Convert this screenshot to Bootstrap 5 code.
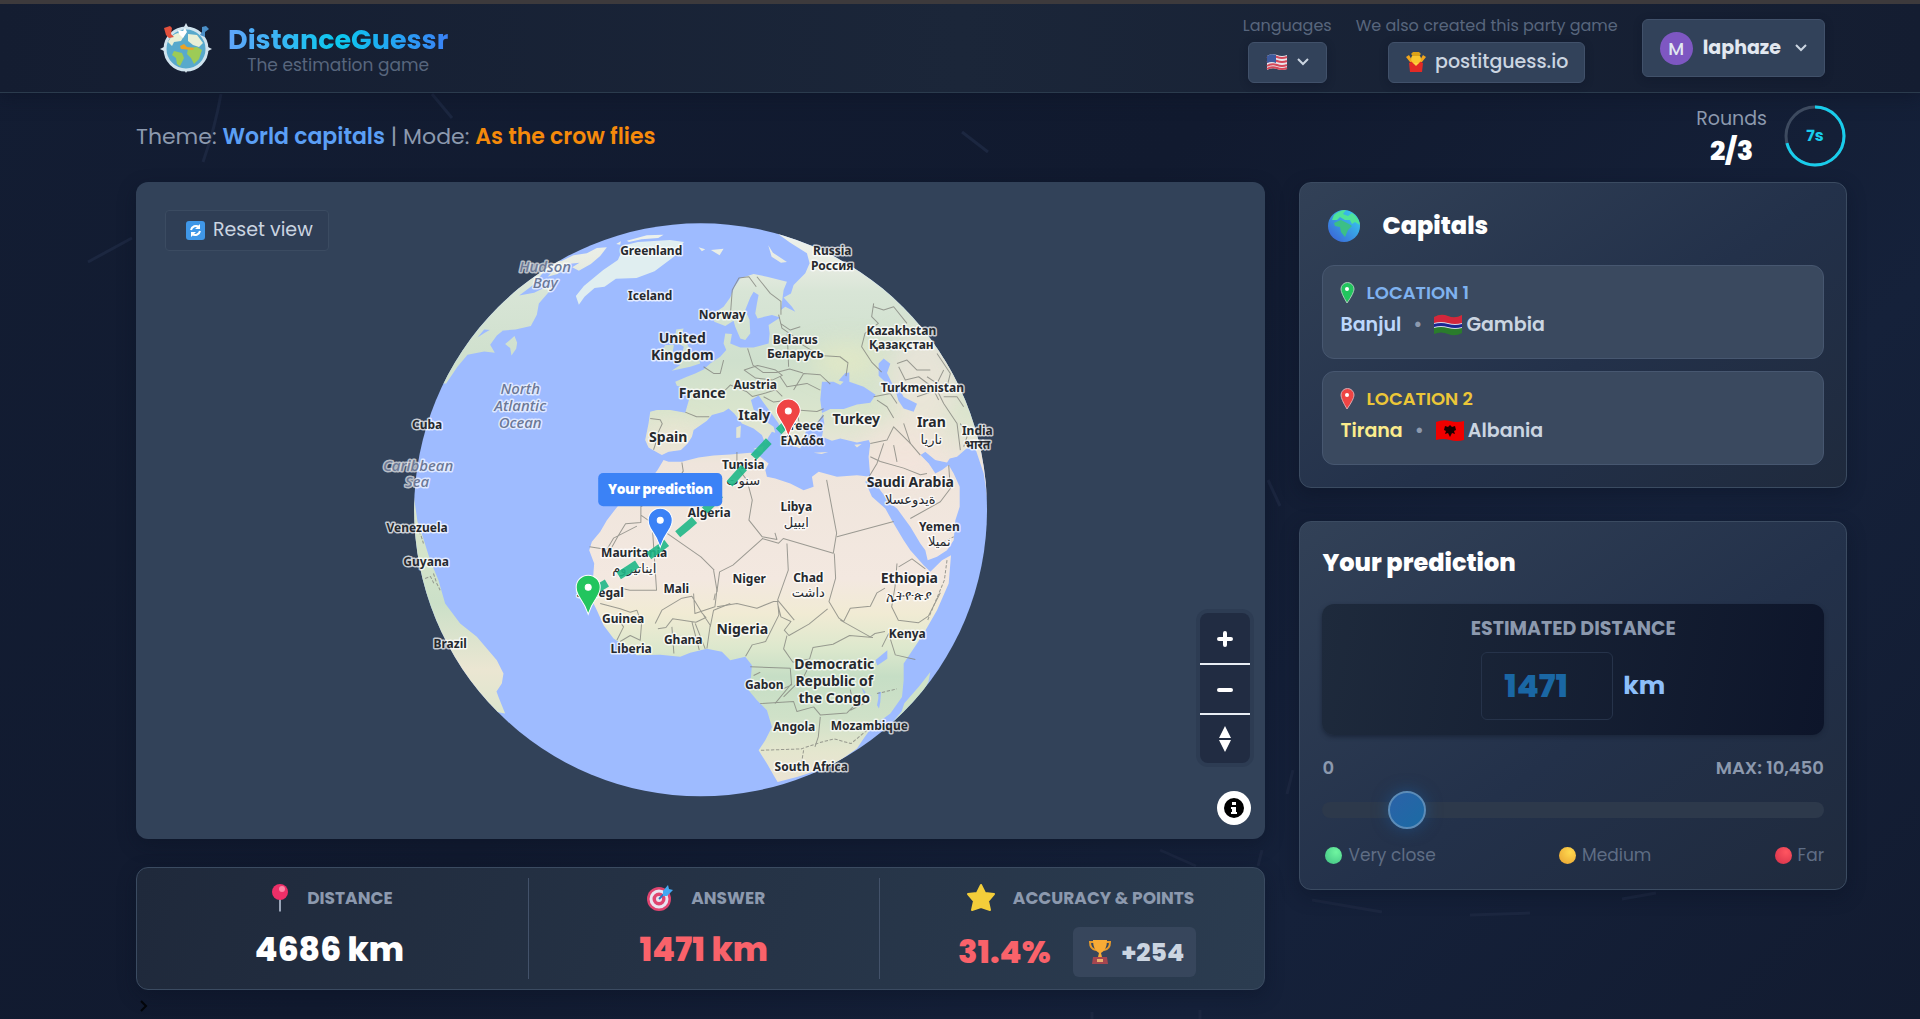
<!DOCTYPE html>
<html lang="en">
<head>
<meta charset="utf-8">
<meta name="viewport" content="width=device-width, initial-scale=1">
<title>DistanceGuessr</title>
<link href="https://cdn.jsdelivr.net/npm/bootstrap@5.3.0/dist/css/bootstrap.min.css" rel="stylesheet">
<style>
:root{--edge:#3b4b61;--muted:#8c99ae;--dim:#58667d}
body{font-family:Poppins,Inter,"Open Sans",sans-serif;color:#cbd5e1;min-height:100vh;background:linear-gradient(135deg,#131d33 0%,#111a2f 45%,#15213a 75%,#121b30 100%);overflow-x:hidden}
.topbar{min-height:93px;border-top:4px solid #3d3a3c;border-bottom:1px solid #2b3b4d;padding:0 95px 0 160px;background:linear-gradient(90deg,#141d31,#1b2639 50%,#141d31);box-shadow:0 4px 16px #0b122480}
.brand-name{font-size:27px;line-height:30px;font-weight:700;background:linear-gradient(90deg,#60a5fa,#0cc8ee 50%,#3b82f6);-webkit-background-clip:text;background-clip:text;color:transparent}
.tagline{font-size:17px;line-height:20px;color:var(--dim)}
.cap-label{font-size:16px;line-height:24px;color:var(--dim)}
.chip{display:inline-flex;align-items:center;justify-content:center;gap:8px;height:41px;padding:0 16px;border:1px solid #41516a;border-radius:6px;background:#32425a;color:#cbd5e1;font-size:19px;font-weight:500;text-decoration:none;box-shadow:0 2px 8px #0b122455}
.chip-lang{padding:0 17px;gap:9px}
.chip-user{height:58px;padding:0 17px;font-weight:700;gap:10px;color:#e2e8f0}
.avatar{width:33px;height:33px;background:#7e57c2;font-size:18px;font-weight:500}
.page{padding:0 73px 0 136px}
.infobar{min-height:89px;font-size:22px;color:var(--muted)}
.infobar>div{margin-top:-3px}
.t-blue{color:#5b9ff5;font-weight:600}
.t-orange{color:#f58a0b;font-weight:600}
.rounds{line-height:32px;font-size:19px;padding-bottom:3px}
.rounds b{font-size:27px;color:#fff;font-weight:800}
.cols{gap:34px}
.side{flex:0 0 32%}
.panel{border:1px solid var(--edge);border-radius:12px;background:linear-gradient(145deg,#324157,#23314a 55%,#1f2a3d);box-shadow:0 6px 18px #0b122466}
.mapbox{border-radius:12px;background:#324259;box-shadow:0 6px 18px #0b122466;overflow:hidden}
.mapbox>svg{display:block;width:100%;height:auto}
.reset{position:absolute;left:29px;top:28px;height:41px;padding:0 15px 0 20px;border:1px solid #3b4b61;border-radius:4px;background:#2f3e55;color:#cbd5e1;font-size:19px}
.zoomer{position:absolute;right:15px;bottom:76px;width:50px;border-radius:8px;overflow:hidden;background:#212c42;box-shadow:0 0 0 4px #2d3c53}
.zoomer button{height:50px;border:0;background:none;color:#fff}
.zoomer button+button{border-top:2px solid #e8edf4}
.about{position:absolute;right:14px;bottom:14px;width:34px;height:34px;padding:0;border:0;border-radius:50%;background:#fff}
.lbl text,.sea text{text-anchor:middle;font-family:"Noto Sans","DejaVu Sans",sans-serif;paint-order:stroke;stroke-linejoin:round}
.lbl text{font-weight:700;font-size:12px;fill:#26292e;stroke:#ffffffb8;stroke-width:3px}
.lbl .big{font-size:14px}
.lbl .alt{font-weight:500;font-size:13px}
.sea text{font-style:italic;font-size:15px;font-weight:500;fill:#6b7896;stroke:#ffffffa8;stroke-width:3px}
.tip{font-size:13px;font-weight:800;fill:#fff;text-anchor:middle}
.stats{margin-top:28px;padding:10px 0;background:linear-gradient(110deg,#1f293b,#2b3c50)}
.stat{flex:11;min-height:101px;padding-top:4px}
.stat-first{padding-right:6px}
.stat-mid{flex:10;border:solid #43526a;border-width:0 1px}
.stat-cap{font-size:17px;line-height:32px;font-weight:700;color:var(--muted);gap:17px}
.stat-val{font-size:33px;line-height:40px;font-weight:800;color:#fff;margin-top:16px}
.stat-val.bad{color:#f9626a}
.stat-row{gap:22px;margin-top:13px;padding-left:10px}
.stat-row .stat-val{margin-top:0;font-size:32px}
.pts{height:50px;border-radius:6px;padding:0 12px 0 16px;background:#37465c;font-size:25px;font-weight:800;color:#cbd5e1;gap:11px}
.side h2{font-size:24px;line-height:32px;font-weight:800;color:#fff;margin:0}
.sidecard{padding:26px 22px 22px}
.loc{border:1px solid #475770;border-radius:12px;background:#3a495f;min-height:94px;padding:13px 17px 0;margin-top:22px}
.loc+.loc{margin-top:12px}
.loc-cap{font-size:18px;line-height:28px;font-weight:600;gap:11px}
.loc-name{font-size:19px;line-height:36px;font-weight:600;gap:12px}
.loc-1 .loc-cap{color:#7fb2ef}
.loc-1 .city{color:#bcd7fb}
.loc-2 .loc-cap{color:#ecc638}
.loc-2 .city{color:#fbec8c}
.dot{color:#8c99ae}
.predict{margin-top:33px;padding-top:25px}
.est{border-radius:12px;background:linear-gradient(100deg,#1e2a3c,#0d152a);min-height:131px;margin-top:25px;padding:13px 0 14px;box-shadow:0 2px 4px #1b263a}
.est label{font-size:19px;line-height:24px;font-weight:700;color:var(--muted)}
.est input{width:132px;height:68px;border:1px solid #26334a;border-radius:6px;padding:0 22px;font-size:32px;font-weight:800;background:none;color:#1a67a4}
.km{font-size:25px;font-weight:700;color:#8dbffa}
.est-row{gap:10px;margin-top:10px}
.scale{font-size:18px;line-height:24px;font-weight:600;color:var(--muted);margin-top:21px}
.slide{display:block;width:100%;height:38px;margin:11px 0 14px;appearance:none;-webkit-appearance:none;background:none}
.slide::-webkit-slider-runnable-track{height:16px;border-radius:8px;background:#2d394b}
.slide::-webkit-slider-thumb{-webkit-appearance:none;width:38px;height:38px;margin-top:-11px;border-radius:50%;border:2px solid #5c8cb8;background:linear-gradient(135deg,#2b62a8,#1b6ba4);box-shadow:0 0 16px #1d5a9a99}
.legend-row{font-size:17px;line-height:24px;color:#5f6d84}
.legend-row span{gap:6px}
.ball{width:17px;height:17px;border-radius:50%}
.ball-g{background:radial-gradient(circle at 65% 30%,#6ff5a0,#3fc083);margin-left:3px}
.ball-y{background:radial-gradient(circle at 65% 30%,#ffd94f,#e8a030)}
.ball-r{background:radial-gradient(circle at 65% 30%,#ff5560,#d42f49)}
.scratches{position:absolute;inset:0;width:100%;height:100%;z-index:-1;pointer-events:none}
.more{border:0;background:none;color:#03050a;padding:10px 0 0 4px;line-height:0}
</style>
</head>
<body class="position-relative">
<svg class="scratches" viewBox="0 0 1920 1019" preserveAspectRatio="none" fill="none" stroke="#1c2740" stroke-width="3" aria-hidden="true"><path d="M221 94q-6 34-18 68M432 94l20 24M88 262l44-24M962 132l26 20M1268 480l12 26M1312 900l70 12M1470 915l60-2M1622 899l34-6M1293 770l-6 24M1262 850l-4 16M1160 850l36 16M1092 1012v8M1200 1010v9"/></svg>

<header class="topbar d-flex align-items-center justify-content-between">
  <div class="d-flex align-items-center">
    <svg width="52" height="50" viewBox="0 0 52 50" aria-label="logo">
      <circle cx="26" cy="26" r="21" fill="#58a9cc" stroke="#cfe3ee" stroke-width="3"/>
      <path d="M8 19q4-8 10-9l6 3-3 5-7 1-2 4zM28 11l9 1 6 8-4 4-6-2-5-4z" fill="#e9efd6"/>
      <path d="M14 28l8 2 2 5-4 8-3-2-1-6-4-3zM28 25l9-1 5 3-3 9-5 5-3-6-4-4z" fill="#9dcb56"/>
      <path d="M20 23l4-2 3 3 7 1-1 2-12-1z" fill="#eca326"/>
      <path d="M4 5l6-2 2 2-1 6 3 3-5 1-3-3z" fill="#e2503c"/><path d="M42 4l4-1 3 3-4 3v5l-5-2 2-3z" fill="#4b8fc7"/>
      <path d="M18 7l5 1 2-3 2 4-4 6-4-4z" fill="#fff"/><path d="M26 0l2 4h-4zM26 50l2-4h-4zM0 26l4-2v4zM52 26l-4-2v4z" fill="#d7e5ee"/>
    </svg>
    <div class="text-center ms-3 pt-1">
      <div class="brand-name">DistanceGuessr</div>
      <div class="tagline">The estimation game</div>
    </div>
  </div>
  <div class="d-flex align-items-center">
    <div class="d-flex flex-column align-items-center gap-1 me-4">
      <span class="cap-label">Languages</span>
      <button class="chip chip-lang" type="button" aria-label="Language: English">
        <svg width="22" height="17" viewBox="0 0 22 17"><path d="M1 2q5-3 10-1t10 0v14q-5 2-10 0T1 16z" fill="#e8e4ea"/><path d="M1 4q5-3 10-1t10 0M1 8q5-3 10-1t10 0M1 12q5-3 10-1t10 0M1 15q5-3 10-1t10 0" stroke="#d5485a" stroke-width="2" fill="none"/><path d="M1 2q5-3 9-1v8q-4-2-9 0z" fill="#3d5a9e"/></svg>
        <svg width="12" height="8" viewBox="0 0 12 8" fill="none" stroke="#cbd5e1" stroke-width="2"><path d="M1 1l5 5 5-5"/></svg>
      </button>
    </div>
    <div class="d-flex flex-column align-items-center gap-1 me-4">
      <span class="cap-label">We also created this party game</span>
      <a class="chip" href="#">
        <svg width="22" height="22" viewBox="0 0 22 22"><path d="M1 6l3-2 4 7H5zM21 6l-3-2-4 7h3z" fill="#f0a51d"/><path d="M4 12q7-5 14 0l-1 9H5z" fill="#e32a25"/><circle cx="11" cy="8" r="5" fill="#f9c62f"/><path d="M6 3l2-2h6l2 2-2 2H8z" fill="#dba218"/><path d="M8 12l3 3 3-3z" fill="#ffd23f"/></svg>
        <span>postitguess.io</span>
      </a>
    </div>
    <button class="chip chip-user" type="button">
      <span class="avatar rounded-circle d-inline-flex align-items-center justify-content-center">M</span>laphaze
      <svg class="ms-1" width="12" height="8" viewBox="0 0 12 8" fill="none" stroke="#cbd5e1" stroke-width="2"><path d="M1 1l5 5 5-5"/></svg>
    </button>
  </div>
</header>

<main class="page">
  <div class="infobar d-flex align-items-center justify-content-between">
    <div>Theme: <span class="t-blue">World capitals</span> | Mode: <span class="t-orange">As the crow flies</span></div>
    <div class="d-flex align-items-center gap-3">
      <div class="rounds text-center d-flex flex-column"><span>Rounds</span><b>2/3</b></div>
      <svg width="64" height="64" viewBox="0 0 64 64" fill="none" stroke-width="3"><circle cx="32" cy="32" r="29" stroke="#3d4a5f"/><circle cx="32" cy="32" r="29" stroke="#18cdec" pathLength="100" stroke-dasharray="71 29" transform="rotate(-90 32 32)"/><text x="32" y="37" text-anchor="middle" font-size="16" font-weight="700" fill="#18cdec">7s</text></svg>
    </div>
  </div>

  <div class="cols d-flex align-items-start">
    <div class="flex-grow-1">
      <div class="mapbox position-relative">
        <svg viewBox="136 182 1129 657" role="img" aria-label="Globe map">
          <defs>
            <clipPath id="disc"><circle cx="991" cy="899" r="859"/></clipPath>
            <linearGradient id="soil" gradientUnits="userSpaceOnUse" x1="0" y1="40" x2="0" y2="1760">
              <stop offset="0" stop-color="#eff3f0"/><stop offset=".07" stop-color="#e8ece2"/><stop offset=".12" stop-color="#d8e5d6"/><stop offset=".24" stop-color="#cfe0cd"/><stop offset=".33" stop-color="#dae5cd"/><stop offset=".42" stop-color="#efe5dc"/><stop offset=".62" stop-color="#f3e8e0"/><stop offset=".68" stop-color="#f1ebd4"/><stop offset=".74" stop-color="#dde8cd"/><stop offset=".79" stop-color="#c6dec5"/><stop offset=".86" stop-color="#cfe1c8"/><stop offset=".92" stop-color="#e4e6ce"/><stop offset="1" stop-color="#f0e3d6"/>
            </linearGradient>
            <linearGradient id="amazon" x1="0" y1="0" x2="0" y2="1"><stop offset="0" stop-color="#dfe8cc"/><stop offset=".5" stop-color="#cbe0c8"/><stop offset=".8" stop-color="#ebe6d2"/><stop offset="1" stop-color="#dde6cd"/></linearGradient>
            <filter id="soft" x="-50%" y="-50%" width="200%" height="200%"><feGaussianBlur stdDeviation="36"/></filter>
            <path id="eurasia" d="M1200 55L1260 98 1310 130 1318 160 1305 190 1270 225 1262 250 1240 262 1265 290 1275 305 1245 290 1232 300 1240 240 1250 215 1190 200 1150 192 1110 205 1092 232 1080 262 1060 290 1030 310 1032 335 1065 348 1090 332 1095 350 1110 385 1125 390 1140 370 1138 330 1125 300 1140 262 1150 245 1165 255 1160 280 1155 310 1162 325 1205 315 1230 322 1195 345 1198 370 1195 400 1150 412 1110 412 1080 400 1085 372 1065 370 1060 400 1068 420 1050 440 1020 460 1000 478 975 490 950 500 915 515 920 527 950 535 956 570 945 608 900 600 860 600 840 605 835 640 825 690 835 712 852 722 875 735 895 725 932 720 952 700 965 680 970 660 1010 632 1025 615 1060 605 1075 595 1092 610 1115 640 1150 655 1175 675 1185 700 1195 680 1205 665 1215 668 1210 650 1180 630 1150 598 1142 570 1165 556 1178 575 1200 605 1225 640 1235 680 1255 700 1290 715 1300 690 1310 650 1340 640 1358 612 1362 640 1355 680 1385 692 1410 685 1460 697 1495 690 1500 700 1495 740 1500 800 1530 840 1560 880 1580 895 1620 950 1650 1000 1665 1020 1672 1050 1700 1040 1730 1020 1750 990 1755 930 1768 890 1768 830 1750 790 1735 765 1715 780 1695 790 1675 760 1650 735 1665 725 1695 750 1730 757 1738 745 1760 740 1785 718 1810 700 1820 730 1840 790 1850 860H1990V40H1310z"/>
            <clipPath id="east"><use href="#eurasia"/></clipPath>
          </defs>
          <svg x="370" y="210" width="660" height="600" viewBox="0 0 1980 1800">
            <g clip-path="url(#disc)">
              <rect width="1980" height="1800" fill="#9ebbff"/>
              <g fill="url(#soil)">
                <path d="M180 520H228l34-50 30-36 50-10 32 4-14-24 20-28 28-22-36-2-28 16-22 14 20-24 50 4 44-4 46-10 18-34 6-34 28-32 20-18-30 2-32 16-45 8 40-30 30-36 60-34-100-40-240 200z"/>
                <path d="M560 160l50-24 40-6 30-16 30-2-20 26-28 24-36 20-20-10 22-14-36 4-30 30-30 8 26-26z"/>
                <path d="M405 402l28-24 8 20-3 18-14 20-4-22zM738 102l14-8-2 10zM770 92l60-16 50-2-16 10-50 4-38 8z"/>
                <path d="M626 284l-9-26 24-30 58-48 44-30 20-44 40-10 96-6 42 6-10 14-22 32-56 42-54 20-62 2-34 24-30 4-30 26z" fill="#e0eef0"/>
                <path d="M1022 120l38-4-12 20zM1194 106l14 22 42 28-18 2-28-18zM985 112l20 6-10 6z"/>
                <path d="M918 358l22-3-6 20 26 5-10 20 15 30 20 10 5 20-30 10-56 12 26-17-15-10 20-25 6-20-16-10-10-20zM885 405l26 0-6 34-34 12 4-26z"/>
                <use href="#eurasia"/>
                <path d="M1500 800L1460 795 1400 800 1345 785 1325 800 1330 830 1300 840 1260 820 1215 805 1190 800 1185 780 1195 760 1170 740 1140 728 1080 733 1030 736 985 742 935 755 895 755 880 750 862 780 845 802 800 830 765 860 745 885 710 930 690 965 665 995 657 1020 672 1060 668 1110 655 1150 680 1200 700 1245 730 1285 760 1305 800 1335 870 1334 930 1340 960 1328 1010 1316 1055 1325 1080 1350 1125 1340 1145 1365 1142 1400 1135 1440 1160 1470 1190 1500 1205 1550 1185 1590 1165 1620 1190 1660 1210 1695 1222 1715 1280 1700 1360 1675 1410 1650 1460 1615 1480 1585 1505 1550 1560 1510 1595 1460 1600 1410 1600 1360 1620 1330 1660 1270 1700 1200 1735 1120 1742 1035 1715 1050 1680 1085 1660 1065 1620 1020 1600 990 1570 940 1545 895 1505 860 1485 815z"/>
                <path d="M100 850h30l12 84 16 46 22 70 25 60 20 70 45 60 50 40 60 70 20 40-5 30-16 24 6 16 20 50L350 1500 60 1200z" fill="url(#amazon)"/>
                <path d="M1680 1385l-6 30-26 50-40 40-44 34 30-36 8-24 44-50z" fill="#cfe2c8"/>
                <path d="M1098 652l14-6-2 36-12 2zM1150 716l30-8-4 20zM1330 728l44-2-20 6zM1452 704l22-2-14 10z"/>
              </g>
              <g clip-path="url(#east)"><g filter="url(#soft)" opacity=".7">
                <ellipse cx="1660" cy="510" rx="110" ry="150" fill="#f1e5dc"/><ellipse cx="1600" cy="720" rx="120" ry="90" fill="#f4e4dc"/><ellipse cx="1430" cy="450" rx="110" ry="50" fill="#eaecc4"/><ellipse cx="910" cy="680" rx="80" ry="40" fill="#eee6d2"/>
              </g></g>
              <g fill="#9ebbff">
                <path d="M1355 515l35 0 20 10 10-10-15-4 20-22 12-2 0 28 43 15 36 24-16 24-40 5-40 14-40 0-25 12-5-40zM1525 460l15-15 20 16-10 28 16 32 20 14 14 26 40 20-10 24-30-10-16-24-8-30-26-20-25-24zM1515 1350l36-30 0 26-30 20z"/>
                <path d="M1474 1432l12 14-4 8 24 0-20 4-8-14zM1524 1445h8l-2 30-4 20-6-10 4-20z"/>
              </g>
              <g fill="none" stroke="#85867f" stroke-width="3" stroke-linejoin="round" opacity=".8">
                <path d="M840 625l30 4 6 12-14 30-6 30-6 18M945 606l34 14 38 0M935 757l4 26-26 40-60 20-40 26M1000 470l30 20 20 0 10-40M1080 320l6-80 20-36 30-4 22 30M1160 200l40 50 32 24 0 40M1225 314l10 40 34 24 30 28 50 30 60 4 24 18-6 40M1132 415l16 50 30 22 40 0 40-10 40 12M1122 480l40-14 54 14 20 16-30 14-50-6zM1255 470l-4-100M1230 500l20 30 60-10 40 20M1230 340l30 20 30-10M1060 545l20-20 50 20 16 14 40-10 30-10 20 20M1180 560l30 16 50-6 20 30 10 60M1280 600l60 4 20-8M1270 540l30-50 50 4 30 28M1300 660l40-20 20-24M1510 560l50-10 20 30M1520 570l30 20 20 34M1500 700l50-10 20-40 50 50M1500 740l30 14 70 20 50 20 20-4M1540 700l-20 60-24 40M1580 755l-10-50"/>
                <path d="M1510 280l-6 40 20 20-40 30-10 40 30 46 30 30M1510 290l30 10 30-10 40 50M1580 460l30-10 30 30 40 0M1585 470l20 40 40-10 40 30 20 40M1640 560l60-20 20 40 40 60 10 80M1720 480l-20 40-30-20M1720 560l40 0 20 30M1700 430l40 60-10 40M1770 640l20 40-10 30M1650 735l-30-35-20-60M1735 765l5 70-30 40-90 50"/>
                <path d="M812 885v52l-46 4-22 36-20 36M812 890l40-30M658 1010l52 8 20-34 70-36M845 930l14 210-80 0-20-4M812 915l180 125 40 40M1030 1080l10 60-6 50-60 20-4-60M855 1240l20-40 60-36 30-6 30 50 12 14-30 14-70-10-20 26-24 4M905 1250l6 80M965 1235l22 84M975 1240l30 76M1000 1215l20 30-10 70M690 1180l60 16 30 10 20-6 14 40-4 50-30-14-30 18M740 1290l20-40-20-30M1035 1150l-4 20M1020 1250l10-50 50-20"/>
                <path d="M1100 726l0 44 30 40 16 60-10 60 40 50 44 8-6-20M1178 985l-90 80-40 20-8 60M1175 985l50 14 14-14 150 44 10-60-30-160M1400 980l170-46M1392 1030l4 74-20 70 30 50M1250 1000l4 80-32 90 50 60M1040 1190l60-10 60 14 50-20 12 0 4 40-40 80-40 10-20 34M1222 1180l10 40 30 14-20 26 14 16 60-34 56-46M1250 1276l-10 40 28 40M1268 1356l50-10 10-34 60-10 50-26 70 6M1406 1224l14 10 20-40 60-6 20-40 24-14M1410 1230l90 50 14-10 30-6M1580 1060l-6 70-10 60 20 40 60 8 30-20 36-70M1585 1070l40-24 40 30M1535 1310l20-40 20 64 60 14M1140 1370l120 4 4 50-30 14M1150 1396l20-10M1264 1420l-50 60M1170 1480l100-6 10 30 50-14M1240 1460l60-60 20-40M1330 1490l20 24 80-6 20-20-10-50M1350 1520l-6 60-10 30M1440 1500l60-30"/>
                <path d="M1172 1620l120-4 60-20 40-10 50 14 60-50M1300 1620l-10 60M1520 1450l60-14M140 950l14 30 6 20M165 1105l16-6 10 20M190 1090l10 30 10 20M1690 1010l60-30M1730 1050l-8 60-50 120" stroke-dasharray="10 5"/>
              </g>
            </g>
          </svg>
          <g class="sea">
            <text x="545" y="272">Hudson</text><text x="545" y="288">Bay</text>
            <text x="520" y="394">North</text><text x="520" y="411">Atlantic</text><text x="520" y="428">Ocean</text>
            <text x="418" y="471">Caribbean</text><text x="417" y="487">Sea</text>
          </g>
          <g class="lbl">
            <text x="651" y="255">Greenland</text><text x="650" y="300">Iceland</text><text x="722" y="319">Norway</text>
            <text class="big" x="682" y="343">United</text><text class="big" x="682" y="360">Kingdom</text>
            <text x="832" y="255">Russia</text><text x="832" y="270">Россия</text>
            <text x="795" y="344">Belarus</text><text x="795" y="358">Беларусь</text>
            <text x="901" y="335">Kazakhstan</text><text x="901" y="349">Қазақстан</text>
            <text x="755" y="389">Austria</text><text class="big" x="702" y="398">France</text>
            <text x="922" y="392">Turkmenistan</text><text class="big" x="754" y="420">Italy</text>
            <text class="big" x="856" y="424">Turkey</text><text x="802" y="430">Greece</text><text x="802" y="445">Ελλάδα</text>
            <text class="big" x="931" y="427">Iran</text><text class="alt" x="931" y="444">ناريا</text>
            <text x="977" y="435">India</text><text x="977" y="449">भारत</text>
            <text class="big" x="668" y="442">Spain</text><text x="743" y="469">Tunisia</text><text class="alt" x="743" y="485">سنوت</text>
            <text class="big" x="910" y="487">Saudi Arabia</text><text class="alt" x="910" y="504">ةيدوعسلا</text>
            <text x="796" y="511">Libya</text><text class="alt" x="796" y="527">ايبيل</text>
            <text x="709" y="517">Algeria</text><text x="939" y="531">Yemen</text><text class="alt" x="939" y="546">نميلا</text>
            <text x="427" y="429">Cuba</text><text x="417" y="532">Venezuela</text><text x="426" y="566">Guyana</text><text x="450" y="648">Brazil</text>
            <text x="634" y="557">Mauritania</text><text class="alt" x="634" y="573">ايناتيروم</text>
            <text x="600" y="597">Senegal</text><text x="676" y="593">Mali</text><text x="749" y="583">Niger</text>
            <text x="808" y="582">Chad</text><text class="alt" x="808" y="597">داشت</text>
            <text class="big" x="909" y="583">Ethiopia</text><text class="alt" x="909" y="600">ኢትዮጵያ</text>
            <text x="623" y="623">Guinea</text><text x="683" y="644">Ghana</text><text x="631" y="653">Liberia</text>
            <text class="big" x="742" y="634">Nigeria</text><text x="907" y="638">Kenya</text>
            <text class="big" x="834" y="669">Democratic</text><text class="big" x="834" y="686">Republic of</text><text class="big" x="834" y="703">the Congo</text>
            <text x="764" y="689">Gabon</text><text x="794" y="731">Angola</text><text x="869" y="730">Mozambique</text><text x="811" y="771">South Africa</text>
          </g>
          <path d="M598 588Q680 540 722 492T788 422" fill="none" stroke="#1fb787" stroke-opacity=".9" stroke-width="8" stroke-dasharray="22 14" stroke-dashoffset="12"/>
          <g stroke="#fff" stroke-width="1">
            <path d="M588 614q-3-9-8-16-4-6-4-11a12 12 0 0 1 24 0q0 5-4 11-5 7-8 16z" fill="#22c55e"/>
            <path d="M660 547q-3-9-8-16-4-6-4-11a12 12 0 0 1 24 0q0 5-4 11-5 7-8 16z" fill="#3b82f6"/>
            <path d="M788 436q-3-9-8-16-4-6-4-9a12 12 0 0 1 24 0q0 3-4 9-5 7-8 16z" fill="#ef4444"/>
            <g fill="#fff"><circle cx="588" cy="587" r="3"/><circle cx="660" cy="520" r="3"/><circle cx="788" cy="411" r="3"/></g>
          </g>
          <rect x="598" y="473" width="124" height="33" rx="5" fill="#3b82f6"/>
          <text class="tip" x="660" y="494">Your prediction</text>
        </svg>
        <button class="reset d-flex align-items-center gap-2" type="button">
          <svg width="19" height="19" viewBox="0 0 19 19"><rect width="19" height="19" rx="3" fill="#3f97e8"/><path d="M5 9a5 5 0 0 1 8-3M14 10a5 5 0 0 1-8 3" fill="none" stroke="#fff" stroke-width="2"/><path d="M14 3v5H9zM5 16v-5h5z" fill="#fff"/></svg>
          Reset view
        </button>
        <div class="zoomer d-flex flex-column">
          <button type="button" aria-label="Zoom in"><svg width="18" height="18" viewBox="0 0 18 18" stroke="#fff" stroke-width="4" stroke-linecap="round"><path d="M3 9h12M9 3v12"/></svg></button>
          <button type="button" aria-label="Zoom out"><svg width="18" height="18" viewBox="0 0 18 18" stroke="#fff" stroke-width="4" stroke-linecap="round"><path d="M3 9h12"/></svg></button>
          <button type="button" aria-label="Reset north"><svg width="14" height="28" viewBox="0 0 14 28" fill="#fff"><path d="M7 1l6 12H1zM7 27l6-12H1z"/></svg></button>
        </div>
        <button class="about" type="button" aria-label="Attribution"><svg class="d-block" width="34" height="34" viewBox="0 0 34 34"><circle cx="17" cy="17" r="10"/><path d="M15 11h4v3h-4zM14 16h5v5h1v2h-6v-2h1v-3h-1z" fill="#fff"/></svg></button>
      </div>

      <div class="panel stats d-flex text-center">
        <div class="stat stat-first">
          <div class="stat-cap d-flex align-items-center justify-content-center ps-1"><svg width="20" height="30" viewBox="0 0 20 30"><path d="M9 14h2v14l-1 1-1-1z" fill="#9aa5b8"/><circle cx="10" cy="9" r="8" fill="#ee2f68"/><circle cx="12" cy="6" r="3" fill="#fb84a5"/></svg>DISTANCE</div>
          <div class="stat-val">4686 km</div>
        </div>
        <div class="stat stat-mid">
          <div class="stat-cap d-flex align-items-center justify-content-center ps-1"><svg width="28" height="28" viewBox="0 0 28 28" fill="none"><circle cx="13" cy="15" r="12" fill="#e04570"/><circle cx="13" cy="15" r="8" stroke="#e9e4f0" stroke-width="3"/><circle cx="13" cy="15" r="3" fill="#e9e4f0"/><path d="M13 15L22 6" stroke="#2d76c0" stroke-width="2"/><path d="M17 7l5-6 1 4 4 1-6 6h-4z" fill="#44a8f2"/></svg>ANSWER</div>
          <div class="stat-val bad">1471 km</div>
        </div>
        <div class="stat">
          <div class="stat-cap d-flex align-items-center justify-content-center ps-3"><svg width="30" height="30" viewBox="0 0 30 30"><path d="M15 2l4 8 9 1-6 7 2 9-9-3-9 3 2-9-6-7 9-1z" fill="#f4ce3a" stroke="#f4ce3a" stroke-width="2" stroke-linejoin="round"/></svg>ACCURACY &amp; POINTS</div>
          <div class="stat-row d-flex align-items-center justify-content-center">
            <span class="stat-val bad">31.4%</span>
            <span class="pts d-inline-flex align-items-center"><svg width="22" height="26" viewBox="0 0 22 26"><path d="M5 3H1q0 7 6 8M17 3h4q0 7-6 8" fill="none" stroke="#e79a2b" stroke-width="2"/><path d="M4 1h14q0 10-6 13l1 4H9l1-4Q4 11 4 1z" fill="#f8ab35"/><path d="M4 18h14l1 7H3z" fill="#a5464f"/><path d="M8 20h6v3H8z" fill="#e8b070"/></svg>+254</span>
          </div>
        </div>
      </div>
      <button class="more d-block" type="button" aria-label="More"><svg width="8" height="12" viewBox="0 0 8 12" fill="none" stroke="#03050a" stroke-width="2"><path d="M1 1l5 5-5 5"/></svg></button>
    </div>

    <aside class="side">
      <section class="panel sidecard">
        <div class="d-flex align-items-center ps-1">
          <svg width="36" height="34" viewBox="0 0 36 34"><defs><linearGradient id="ocean" x1="1" y1="0" x2="0" y2="1"><stop stop-color="#37d6f0"/><stop offset="1" stop-color="#3b5bd6"/></linearGradient></defs><circle cx="18" cy="17" r="16" fill="url(#ocean)"/><path d="M8 6q6-5 12-5l-3 4 5 2 4-3q7 5 8 12l-5-3-3 2-2-4-5 0-5-3-3 3-5 0z" fill="#4fe39a"/><path d="M8 14l7-3 8 4 3 2-4 4-3 7-4-5-1-5-5-1z" fill="#3cbf86"/></svg>
          <h2 class="ms-3 ps-1">Capitals</h2>
        </div>
        <div class="loc loc-1">
          <div class="loc-cap d-flex align-items-center"><svg width="15" height="22" viewBox="0 0 15 22"><path d="M7 21Q1 11 1 7a6 6 0 0 1 13 0q0 4-7 14z" fill="#22c55e" stroke="#a9cdb9"/><circle cx="7" cy="7" r="2" fill="#fff"/></svg>LOCATION 1</div>
          <div class="loc-name d-flex align-items-center"><span class="city">Banjul</span><span class="dot">•</span><span class="d-flex align-items-center gap-1"><svg width="28" height="22" viewBox="0 0 28 22"><path d="M0 3q7-4 14-1t14-1v18q-7 4-14 1T0 20z" fill="#2a7c2c"/><path d="M0 3q7-4 14-1t14-1v10q-7 2-14 0T0 12z" fill="#d4263c"/><path d="M0 9q7-2 14 0t14 0v5q-7 2-14 0T0 14z" fill="#d5d8ea"/><path d="M0 10q7-2 14 0t14 0v3q-7 2-14 0T0 13z" fill="#1a2592"/></svg>Gambia</span></div>
        </div>
        <div class="loc loc-2">
          <div class="loc-cap d-flex align-items-center"><svg width="15" height="22" viewBox="0 0 15 22"><path d="M7 21Q1 11 1 7a6 6 0 0 1 13 0q0 4-7 14z" fill="#ef4444" stroke="#d9a9b0"/><circle cx="7" cy="7" r="2" fill="#fff"/></svg>LOCATION 2</div>
          <div class="loc-name d-flex align-items-center"><span class="city">Tirana</span><span class="dot">•</span><span class="d-flex align-items-center gap-1"><svg width="28" height="22" viewBox="0 0 28 22"><path d="M0 2q7-3 14-1t14 0v19q-7 2-14 0T0 20z" fill="#f00000"/><path d="M14 17l-2-4-3 1 1-3-2-1 1-4 3 1 2-2 2 2 3-1 1 4-2 1 1 3-3-1z" fill="#1b0000"/></svg>Albania</span></div>
        </div>
      </section>

      <section class="panel sidecard predict">
        <h2>Your prediction</h2>
        <div class="est text-center">
          <label for="guess">ESTIMATED DISTANCE</label>
          <div class="est-row d-flex align-items-center justify-content-center"><input id="guess" type="text" value="1471"><span class="km">km</span></div>
        </div>
        <div class="scale d-flex justify-content-between"><span>0</span><span>MAX: 10,450</span></div>
        <input class="slide" type="range" min="0" max="10450" value="1471" aria-label="Estimated distance">
        <div class="legend-row d-flex justify-content-between">
          <span class="d-flex align-items-center"><i class="ball ball-g"></i>Very close</span>
          <span class="d-flex align-items-center"><i class="ball ball-y"></i>Medium</span>
          <span class="d-flex align-items-center"><i class="ball ball-r"></i>Far</span>
        </div>
      </section>
    </aside>
  </div>
</main>
<script src="https://cdn.jsdelivr.net/npm/bootstrap@5.3.0/dist/js/bootstrap.bundle.min.js"></script>
</body>
</html>
